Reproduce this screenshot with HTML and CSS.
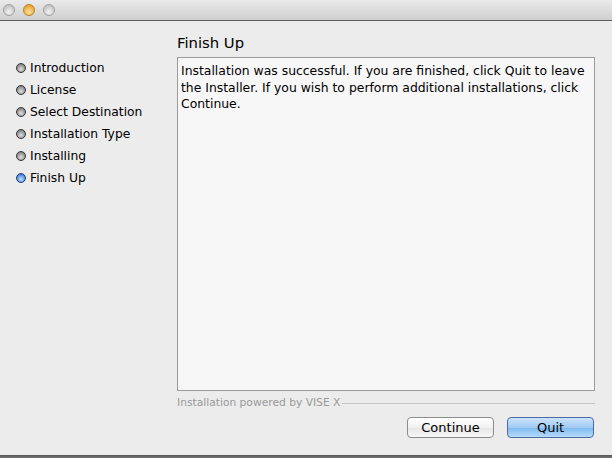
FILE: index.html
```html
<!DOCTYPE html>
<html>
<head>
<meta charset="utf-8">
<link rel="stylesheet" href="styles.css">
</head>
<body>
<div class="window">
  <div class="titlebar">
    <span class="light"></span>
    <span class="light min"></span>
    <span class="light"></span>
  </div>
  <div class="main">
    <ul class="steps">
      <li><span class="dot"></span>Introduction</li>
      <li><span class="dot"></span>License</li>
      <li><span class="dot"></span>Select Destination</li>
      <li><span class="dot"></span>Installation Type</li>
      <li><span class="dot"></span>Installing</li>
      <li><span class="dot active"></span>Finish Up</li>
    </ul>
    <div class="content">
      <h1 class="heading">Finish Up</h1>
      <div class="textbox">Installation was successful. If you are finished, click Quit to leave the Installer. If you wish to perform additional installations, click Continue.</div>
      <div class="powered"><span>Installation powered by VISE X</span><span class="rule"></span></div>
      <div class="buttons">
        <button class="btn">Continue</button>
        <button class="btn primary">Quit</button>
      </div>
    </div>
  </div>
  <div class="bottom"></div>
</div>
</body>
</html>
```
FILE: styles.css
```css
html, body { margin: 0; padding: 0; }
body {
  width: 612px; height: 458px; overflow: hidden;
  background: #ececec;
  font-family: "DejaVu Sans", "Liberation Sans", sans-serif;
  color: #000;
}
.window { display: flex; flex-direction: column; height: 458px; }
.titlebar {
  height: 21px;
  background: linear-gradient(#eaeaea, #cfcfcf);
  border-bottom: 1px solid #5a5a5a;
  display: flex; align-items: center; gap: 8px;
  padding-left: 3px;
  box-sizing: border-box;
}
.light {
  width: 12px; height: 12px; border-radius: 50%;
  background: radial-gradient(circle at 50% 70%, #f2f2f2, #c4c4c4 75%);
  border: 1px solid #a0a0a0;
  box-sizing: border-box;
}
.light.min {
  background: radial-gradient(circle at 50% 70%, #fbe39a, #e7a531 75%);
  border-color: #b98326;
}
.main { flex: 1; display: flex; }
.steps {
  list-style: none; margin: 0; padding: 36px 0 0 16px;
  width: 177px; box-sizing: border-box;
}
.steps li {
  height: 22px; font-size: 12.3px; line-height: 22px;
  display: flex; align-items: center; white-space: nowrap;
}
.dot {
  width: 10px; height: 10px; border-radius: 50%; box-sizing: border-box;
  border: 1px solid #333;
  background: radial-gradient(circle at 50% 65%, #e0e0e0, #7d7d7d 80%);
  margin-right: 4px;
}
.dot.active {
  border-color: #1c3f7a;
  background: radial-gradient(circle at 50% 65%, #bfe0ff, #3b78d0 80%);
}
.content { width: 418px; display: flex; flex-direction: column; padding-top: 12px; }
.heading { font-size: 14.8px; font-weight: normal; margin: 0 0 4px 0; line-height: 20px; height: 20px; }
.textbox {
  height: 334px; box-sizing: border-box;
  border: 1px solid #9b9b9b;
  background: #f7f7f7;
  font-size: 12.4px; line-height: 16.5px;
  padding: 5px 3px;
}
.powered {
  display: flex; align-items: center; margin-top: 4px;
  font-size: 10.7px; color: #999; height: 15px;
}
.powered .rule { flex: 1; height: 1px; background: #c4c4c4; margin-left: 2px; margin-top: 1px; }
.buttons { display: flex; justify-content: flex-end; gap: 13px; margin-top: 7px; padding-right: 1px; }
.btn {
  font-family: inherit; font-size: 13px;
  height: 21px; padding: 0; box-sizing: border-box;
  border-radius: 4px; border: 1px solid #8c8c8c;
  background: linear-gradient(#ffffff, #f1f1f1 50%, #e6e6e6 51%, #f7f7f7);
  color: #000; width: 87px; line-height: 19px;
}
.btn.primary {
  border-color: #4d6b9e;
  background: linear-gradient(#cde3fb, #9fcaf4 50%, #7fb8ef 51%, #b4dcfb);
}
.bottom { height: 3px; background: linear-gradient(#555, #777); margin-top: auto; }
```
